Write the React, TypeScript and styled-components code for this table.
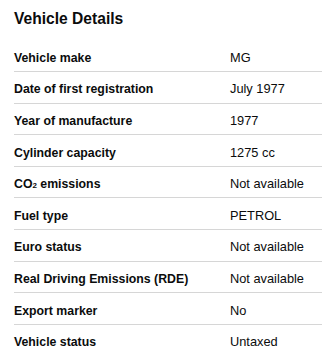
import React from 'react'
import styled, { createGlobalStyle } from 'styled-components'

const GlobalStyle = createGlobalStyle`
    body {
        margin: 0;
        background: #ffffff;
        font-family: "Liberation Sans", Arial, sans-serif;
        color: #0b0c0c;
    }
`

const Wrapper = styled.div`
    padding: 0 1px 0 14px;
`

const Title = styled.h2`
    margin: 0;
    padding-top: 9px;
    height: 40.4px;
    box-sizing: border-box;
    font-size: 15.6px;
    line-height: 19px;
    font-weight: 700;
`

const List = styled.dl`
    margin: 0;
`

const Row = styled.div`
    display: grid;
    grid-template-columns: 216px 1fr;
    align-items: baseline;
    height: 31.6px;
    box-sizing: border-box;
    padding-top: 9.5px;
    border-bottom: 1px solid #d6d6d6;
`

const Key = styled.dt`
    margin: 0;
    font-size: 12.3px;
    line-height: 16px;
    font-weight: 700;
`

const Value = styled.dd`
    margin: 0;
    font-size: 12.8px;
    line-height: 16px;
`

const Sub = styled.span`
    font-size: 0.65em;
    vertical-align: baseline;
`

const details: { label: React.ReactNode; value: string }[] = [
    { label: 'Vehicle make', value: 'MG' },
    { label: 'Date of first registration', value: 'July 1977' },
    { label: 'Year of manufacture', value: '1977' },
    { label: 'Cylinder capacity', value: '1275 cc' },
    { label: <>CO<Sub>2</Sub> emissions</>, value: 'Not available' },
    { label: 'Fuel type', value: 'PETROL' },
    { label: 'Euro status', value: 'Not available' },
    { label: 'Real Driving Emissions (RDE)', value: 'Not available' },
    { label: 'Export marker', value: 'No' },
    { label: 'Vehicle status', value: 'Untaxed' },
]

function App() {
    return (
        <Wrapper>
            <GlobalStyle />
            <Title>Vehicle Details</Title>
            <List>
                {details.map((d, i) => (
                    <Row key={i}>
                        <Key>{d.label}</Key>
                        <Value>{d.value}</Value>
                    </Row>
                ))}
            </List>
        </Wrapper>
    )
}

export default App
